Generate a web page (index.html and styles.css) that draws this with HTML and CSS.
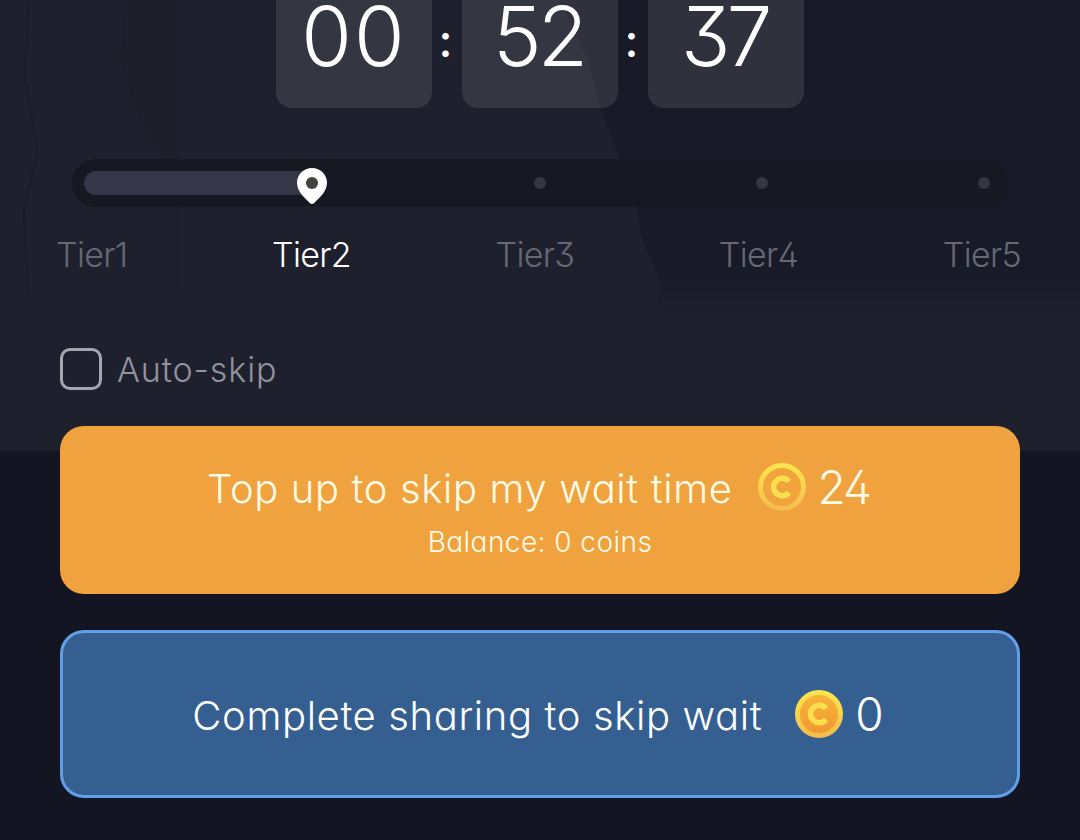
FILE: index.html
```html
<!DOCTYPE html>
<html lang="en">

<head>
    <meta charset="UTF-8">
    <meta name="viewport" content="width=device-width, initial-scale=1.0">
    <title>Wait Time</title>
    <link rel="stylesheet" href="styles.css">
</head>

<body>
    <svg class="backdrop" viewBox="0 0 1080 451" aria-hidden="true">
        <defs>
            <linearGradient id="fade" x1="0" y1="0" x2="0" y2="1">
                <stop offset="0.85" stop-color="#191a27" />
                <stop offset="1" stop-color="#191a27" stop-opacity="0" />
            </linearGradient>
            <linearGradient id="coinRim" x1="0" y1="0" x2="0" y2="1">
                <stop offset="0" stop-color="#fbe64d" />
                <stop offset="1" stop-color="#f5bd4d" />
            </linearGradient>
            <linearGradient id="coinFace" x1="0" y1="0" x2="0" y2="1">
                <stop offset="0" stop-color="#f7b63b" />
                <stop offset="1" stop-color="#f0962f" />
            </linearGradient>
        </defs>
        <path fill="url(#fade)" d="M560 0H1080V325H655L660 280L642 240L636 205L618 155L600 108L588 60Z" />
        <path class="backdrop-line" d="M28 0L25 80L38 150L24 210L28 300" />
        <path class="backdrop-shade" d="M125 0H178V155H160L135 110L120 60Z" />
        <path class="backdrop-line" d="M178 155V290" />
    </svg>

    <div class="container">
        <div class="timer">
            <div class="timer-box hours">00</div>
            <div class="timer-colon">:</div>
            <div class="timer-box">52</div>
            <div class="timer-colon">:</div>
            <div class="timer-box">37</div>
        </div>

        <div class="progress">
            <div class="progress-fill"></div>
            <svg class="pin" viewBox="0 0 30 36">
                <path fill="#fff" d="M15 0C6.700 0 0 6.500 0 14.800C0 24 8.500 30.500 13 35.200Q15 36.800 17 35.200C21.500 30.500 30 24 30 14.800C30 6.500 23.300 0 15 0Z" />
                <circle cx="15" cy="15" r="6" fill="#43423f" />
            </svg>
            <div class="dots">
                <span class="dot"></span>
                <span class="dot"></span>
                <span class="dot"></span>
            </div>
        </div>

        <div class="tiers">
            <span class="tier">Tier1</span>
            <span class="tier active">Tier2</span>
            <span class="tier">Tier3</span>
            <span class="tier">Tier4</span>
            <span class="tier">Tier5</span>
        </div>

        <label class="auto-skip">
            <input type="checkbox" class="checkbox">
            <span class="auto-skip-text">Auto-skip</span>
        </label>

        <button class="button top-up">
            <span class="button-row">
                <span class="button-text">Top up to skip my wait time</span>
                <svg class="coin" viewBox="0 0 48 48">
                    <circle cx="24" cy="24" r="21.500" fill="#f1a43c" stroke="url(#coinRim)" stroke-width="5" />
                    <path class="coin-mark" d="M31 18.500A8.700 8.700 0 1 0 31 29.500" />
                </svg>
                <span class="amount">24</span>
            </span>
            <span class="balance">Balance: 0 coins</span>
        </button>

        <button class="button share">
            <span class="button-row">
                <span class="button-text">Complete sharing to skip wait</span>
                <svg class="coin" viewBox="0 0 48 48">
                    <circle cx="24" cy="24" r="21.500" fill="url(#coinFace)" stroke="url(#coinRim)" stroke-width="5" />
                    <path class="coin-mark" d="M31 18.500A8.700 8.700 0 1 0 31 29.500" />
                </svg>
                <span class="amount">0</span>
            </span>
        </button>
    </div>
</body>

</html>
```
FILE: styles.css
```css
* {
    box-sizing: border-box;
}

body {
    margin: 0;
    height: 840px;
    overflow: hidden;
    position: relative;
    font-family: Inter, 'Open Sans', sans-serif;
    font-weight: 300;
    font-feature-settings: 'cv11', 'cv09', 'cv02';
    color: #fff;
    background: linear-gradient(#1e212d 451px, #131622 451px);
}

/* faint artwork behind the timer */
.backdrop {
    position: absolute;
    top: 0;
    left: 0;
    width: 1080px;
    height: 451px;
}

.backdrop-line {
    fill: none;
    stroke: #1a1d28;
    stroke-width: 2;
}

.backdrop-shade {
    fill: #1c1f2a;
}

.container {
    position: relative;
    padding: 0 60px;
}

.timer {
    display: flex;
    justify-content: center;
    height: 108px;
    font-size: 82px;
    line-height: 74px;
}

.timer-box {
    width: 156px;
    height: 108px;
    padding-right: 3px;
    border-radius: 0 0 16px 16px;
    text-align: center;
    letter-spacing: -4px;
    background: rgba(255, 255, 255, 0.1);
}

.hours {
    padding-right: 0;
    letter-spacing: 2px;
}

.timer-colon {
    width: 30px;
    padding-right: 3px;
    text-align: center;
    font-size: 46px;
    font-weight: 500;
    line-height: 80px;
}

.progress {
    display: flex;
    align-items: center;
    height: 48px;
    margin: 51px 12px 0;
    padding: 0 18px 0 12px;
    border-radius: 24px;
    background: #161922;
}

.progress-fill {
    width: 228px;
    height: 24px;
    border-radius: 12px 0 0 12px;
    background: #353748;
}

.pin {
    width: 30px;
    height: 36px;
    margin: 6px 0 0 -15px;
    flex-shrink: 0;
}

.dots {
    flex: 1;
    display: flex;
    justify-content: space-between;
    margin-left: 207px;
}

.dot {
    width: 12px;
    height: 12px;
    border-radius: 50%;
    background: #343643;
}

.tiers {
    display: flex;
    justify-content: space-between;
    margin: 27px -1px 0 -4px;
    font-size: 34px;
    line-height: 42px;
    letter-spacing: -0.7px;
    color: #666873;
}

.active {
    color: #fff;
    font-weight: 350;
}

.auto-skip {
    display: flex;
    align-items: center;
    height: 42px;
    margin-top: 72px;
}

.checkbox {
    appearance: none;
    width: 42px;
    height: 42px;
    margin: 0 15px 0 0;
    border: 3px solid #a5a6af;
    border-radius: 10px;
}

.auto-skip-text {
    font-size: 34px;
    letter-spacing: 0.9px;
    color: #91939e;
}

.button {
    display: flex;
    flex-direction: column;
    align-items: center;
    width: 960px;
    height: 168px;
    padding: 0;
    border: none;
    border-radius: 24px;
    font: inherit;
    font-feature-settings: inherit;
    color: #fff;
}

.button-row {
    display: flex;
    align-items: center;
    height: 48px;
}

.button-text {
    font-size: 40px;
    letter-spacing: 0.62px;
    padding-top: 3px;
}

.coin {
    width: 48px;
    height: 48px;
    margin: 0 12px 0 25px;
}

.coin-mark {
    fill: none;
    stroke: #fae04c;
    stroke-width: 5.5;
}

.amount {
    font-size: 46px;
    letter-spacing: -2px;
}

.top-up {
    margin-top: 36px;
    padding-top: 37px;
    background: #f0a23f;
    color: #fffbe6;
}

.top-up .button-row {
    padding-right: 3px;
}

.balance {
    margin-top: 13px;
    font-size: 28px;
    line-height: 36px;
    letter-spacing: 0.45px;
}

.share {
    justify-content: center;
    margin-top: 36px;
    border: 3px solid #629fe8;
    background: #355f91;
}

.share .button-row {
    padding-right: 6px;
}

.share .coin {
    margin-left: 33px;
}
```
